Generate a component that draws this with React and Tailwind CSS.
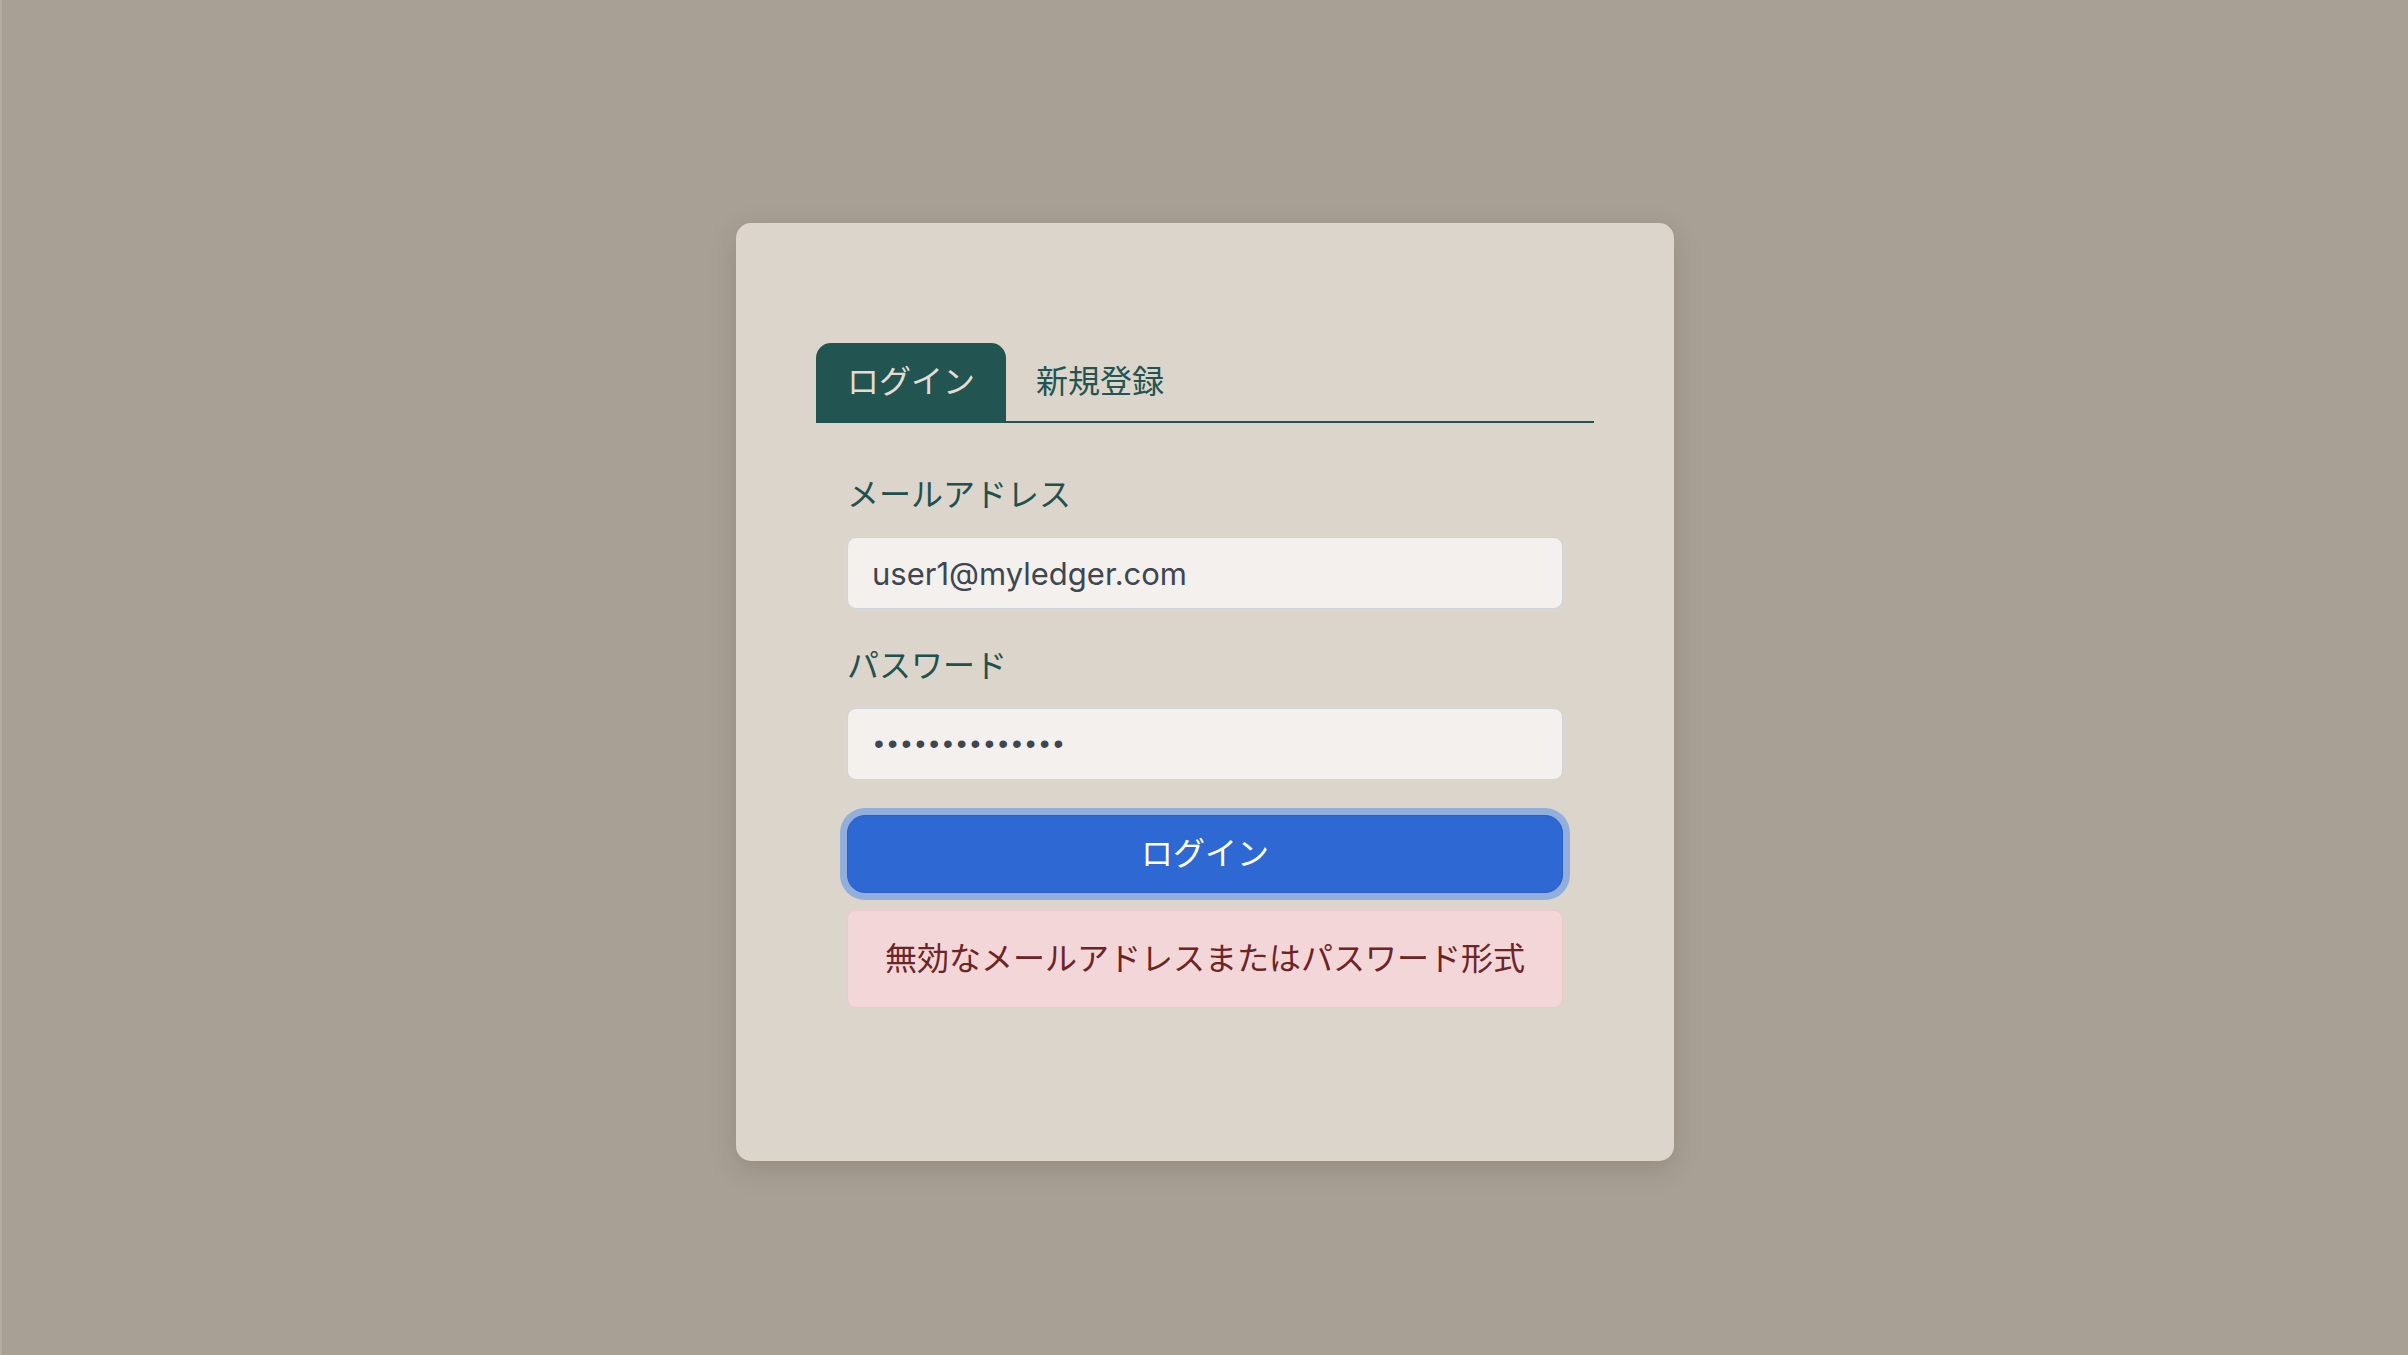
import React, { useState } from 'react';

export default function App() {
  const [tab, setTab] = useState('login');
  const [email, setEmail] = useState('user1@myledger.com');
  const [password, setPassword] = useState('abcdefghijklmn');

  return (
    <div
      className="min-h-screen w-full bg-[#a8a095] border-l-2 border-[#b4ada3] flex items-center justify-center pt-[29px]"
      style={{ fontFamily: 'Inter, "Noto Sans CJK JP", sans-serif' }}
    >
      {/* Card */}
      <div className="w-[938px] h-[938px] rounded-[15px] bg-[#dcd5cb] px-[80px] pt-[120px] shadow-[0_8px_28px_rgba(60,50,40,0.18)]">
        {/* Tabs */}
        <div className="flex border-b-2 border-[#225451]">
          <button
            onClick={() => setTab('login')}
            className={`h-[78px] px-[31px] rounded-t-[15px] text-[32px] leading-none ${tab === 'login' ? 'bg-[#225451] text-[#e4dcd1]' : 'text-[#225451]'}`}
          >
            ログイン
          </button>
          <button
            onClick={() => setTab('signup')}
            className={`h-[78px] px-[30px] rounded-t-[15px] text-[32px] leading-none ${tab === 'signup' ? 'bg-[#225451] text-[#e4dcd1]' : 'text-[#225451]'}`}
          >
            新規登録
          </button>
        </div>

        {/* Form */}
        <div className="px-[31px] pt-[49px]">
          <label className="block text-[32px] leading-[46px] text-[#22514d]">メールアドレス</label>
          <input
            type="email"
            value={email}
            onChange={(e) => setEmail(e.target.value)}
            className="mt-[19px] block w-full h-[72px] rounded-[9px] border border-[#cdd3da] bg-[#f3f0ed] px-[24px] text-[31px] text-[#3e4650] outline-none"
          />

          <label className="mt-[34px] block text-[32px] leading-[46px] text-[#22514d]">パスワード</label>
          <input
            type="password"
            value={password}
            onChange={(e) => setPassword(e.target.value)}
            className="mt-[19px] block w-full h-[72px] rounded-[9px] border border-[#cdd3da] bg-[#f3f0ed] px-[26px] text-[28px] tracking-[4px] text-[#3e4650] outline-none"
            style={{ fontFamily: '"Liberation Sans", sans-serif' }}
          />

          <button className="mt-[35px] block w-full h-[78px] rounded-[18px] border border-[#2a5fc2] bg-[#2d68d3] text-[32px] text-white shadow-[0_0_0_7px_rgba(120,160,225,0.75)]">
            ログイン
          </button>

          <div className="mt-[17px] h-[98px] rounded-[9px] border border-[#efc8cb] bg-[#f3d7d8] flex items-center justify-center text-[32px] text-[#6d2427]">
            無効なメールアドレスまたはパスワード形式
          </div>
        </div>
      </div>
    </div>
  );
}
